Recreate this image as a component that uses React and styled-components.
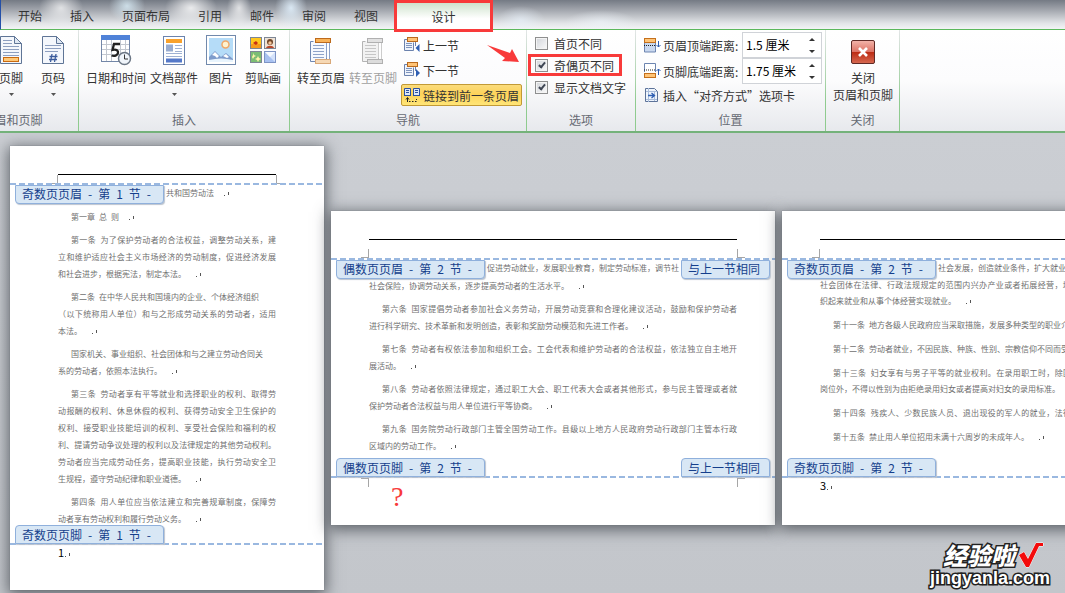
import React from 'react';
import styled, { createGlobalStyle, css } from 'styled-components';

const FooterIcon = () => (
  <svg width="24" height="32" viewBox="0 0 24 32">
    <path d="M1.5 2.5h14l7 7v20h-21z" fill="#f4f7fc" stroke="#5f7596" />
    <path d="M15.5 2.5v7h7z" fill="#dfe8f4" stroke="#5f7596" />
    <path d="M4 6.5h9M4 9.5h9M4 12.5h16M4 15.5h16M4 18.5h16M4 21.5h16" stroke="#8d9fc0" />
    <rect x="4.5" y="23.5" width="15" height="4" fill="#ffc877" stroke="#c96a10" />
  </svg>
);

const PageNumberIcon = () => (
  <svg width="24" height="32" viewBox="0 0 24 32">
    <path d="M1.5 2.5h14l7 7v20h-21z" fill="#f4f7fc" stroke="#5f7596" />
    <path d="M15.5 2.5v7h7z" fill="#dfe8f4" stroke="#5f7596" />
    <path d="M4 11.5h16M4 14.5h16M4 17.5h13" stroke="#8d9fc0" />
    <path d="M11 20l-1.5 8M15 20l-1.5 8M8.500 22.500h8M8 25.500h8" stroke="#3c5c9c" strokeWidth="1.3" fill="none" />
  </svg>
);

const DateIcon = () => (
  <svg width="32" height="32" viewBox="0 0 32 32">
    <rect x="1.5" y="1.5" width="28" height="26" fill="#fff" stroke="#7387a8" />
    <rect x="1" y="1" width="29" height="5" fill="#4f82d8" />
    <path d="M2 10.500h27M2 15.500h27M2 20.500h27M6.500 6v21M11.500 6v21M20.500 6v21M25.500 6v21" stroke="#c2c7cf" />
    <path d="M20 10h-6l-1.500 6c4-1 6 .5 5.500 3-.5 2.500-3.500 3.500-6.500 2.500" stroke="#222" strokeWidth="2.300" fill="none" />
    <circle cx="24.500" cy="24.500" r="6" fill="#f0f5fb" stroke="#6b7685" strokeWidth="1.500" />
    <path d="M24.500 20.500v4.500h3.500" stroke="#333" fill="none" />
  </svg>
);

const PartsIcon = () => (
  <svg width="32" height="32" viewBox="0 0 32 32">
    <rect x="5.500" y="2.500" width="21" height="28" fill="#fff" stroke="#6b83ad" />
    <rect x="8" y="5" width="16" height="4" fill="#f9a22c" />
    <rect x="8" y="10.500" width="7" height="7" fill="#98acd0" />
    <path d="M17 11.500h7M17 14.500h7M17 17.500h7M8 19.500h16M8 22.500h16" stroke="#9fb1d3" />
    <rect x="8" y="24.500" width="16" height="4" fill="#5579c9" />
  </svg>
);

const PictureIcon = () => (
  <svg width="32" height="32" viewBox="0 0 32 32">
    <rect x="1.500" y="1.500" width="29" height="29" fill="#fff" stroke="#7189ac" />
    <rect x="4" y="4" width="24" height="24" fill="#b5dcf8" />
    <circle cx="20.500" cy="10.500" r="3.500" fill="#fff2cf" stroke="#f0a868" strokeWidth="1.500" />
    <path d="M4 23l6-6 6 6 5-4 7 6v3H4z" fill="#7f9ccb" />
    <path d="M7 21l3-3 4 4-2 2-2-2zM18 22l3-2 3 3-2 1z" fill="#fff" />
    <path d="M4 26c8-2 16-2 24 0v2H4z" fill="#e8f4fd" />
  </svg>
);

const ClipArtIcon = () => (
  <svg width="32" height="32" viewBox="0 0 32 32">
    <rect x="3.500" y="3.500" width="11" height="11" fill="#ffc81e" stroke="#7d8694" />
    <path d="M4 10h10v4H4z" fill="#f59a1d" />
    <path d="M6 9l3-2 2 2-2 2z" fill="#c62d13" />
    <rect x="17.500" y="3.500" width="11" height="11" fill="#efe3d6" stroke="#7d8694" />
    <circle cx="23" cy="8" r="3" fill="#704628" />
    <circle cx="23" cy="9" r="1.700" fill="#f5c49a" />
    <path d="M19 14c1-3 7-3 8 0z" fill="#b7472b" />
    <rect x="3.500" y="17.500" width="11" height="11" fill="#7cbd74" stroke="#7d8694" />
    <path d="M6 19l1 2 2 1-2 1-1 2-1-2 1-2zM11 22l1 2 2 1-2 1-1 2-1-2-2-1 2-1z" fill="#fff3a8" />
    <rect x="17.500" y="17.500" width="11" height="11" fill="#d4e2fb" stroke="#7d93c4" />
    <path d="M18 18l10 10H18z" fill="#a8c1f1" />
    <path d="M18 18l5 5 5-5" fill="#f5f9ff" />
  </svg>
);

// the header bar sits at the top, the footer bar at the bottom
const GotoIcon = ({ off }) => (
  <svg width="32" height="32" viewBox="0 0 32 32">
    <path d="M8.500 7.500h-3v20h16v-20" fill={off ? '#f2f2f2' : '#f6f9fe'} stroke={off ? '#b4b4b4' : '#7088b2'} />
    <path d="M8 11.500h11M8 14.500h11M8 17.500h11M8 20.500h11M8 23.500h11" stroke={off ? '#c6c6c6' : '#8fa3c8'} />
    <rect x="10.500" y="4.500" width="15" height="4" fill={off ? '#e2e2e2' : '#f9b257'} stroke={off ? '#b0b0b0' : '#bd6a1c'} />
    <path d="M21.500 9v15M24.500 9v16" stroke={off ? '#ccc' : '#8ba0c7'} />
    <rect x="10.500" y="25.500" width="15" height="4" fill={off ? '#dcdcdc' : '#f6d8b4'} stroke={off ? '#b0b0b0' : '#d8a878'} />
  </svg>
);

const StepIcon = ({ next }) => (
  <svg width="16" height="16" viewBox="0 0 16 16">
    <path d="M3.500 2.500h-3v11h9v-8" fill="#eef3fb" stroke="#6b82ad" />
    <path d="M2 6.500h6M2 8.500h6M2 10.500h6" stroke="#7f95bd" />
    <rect x="3.500" y=".5" width="10" height="4" fill="#ffc477" stroke="#b96a1e" />
    <path d="M11.500 5v4" stroke="#6b82ad" />
    {next
      ? <path d="M12 7l4 4-4 4z" fill="#2f5fb3" />
      : <path d="M15.500 7l-4 4 4 4z" fill="#2f5fb3" />}
  </svg>
);

const LinkIcon = () => (
  <svg width="16" height="16" viewBox="0 0 16 16">
    <path d="M.5 1.500h6v7h-6zM9.500 1.500h6v7h-6z" fill="#dce7f8" stroke="#2c50a0" />
    <path d="M2 3.500h3M2 5.500h3M11 3.500h3M11 5.500h3M0 8.500h7M9 8.500h7" stroke="#2c50a0" />
    <path d="M3.500 15v-4M2 12.500l1.500-2 1.500 2M5 14.500h1.500M8 14.500h1.500M11 14.500h1.500M12.500 12v1" stroke="#222" fill="none" />
  </svg>
);

const DistanceIcon = ({ bottom }) => (
  <svg width="17" height="16" viewBox="0 0 17 16">
    {bottom ? (
      <>
        <path d="M.5 9V.5h11V9" fill="#fff" stroke="#6d85b0" />
        <rect x=".5" y="10.500" width="11" height="4" fill="#ffc477" stroke="#c4701c" />
        <path d="M0 7h12" stroke="#222" strokeDasharray="1 1" />
        <path d="M14.500 12V6M12.500 8l2-2 2 2" stroke="#2f5fb3" fill="none" />
      </>
    ) : (
      <>
        <path d="M.5 6v9h11V6" fill="#c9d8ef" stroke="#6d85b0" />
        <rect x=".5" y="1.500" width="11" height="4" fill="#ffc477" stroke="#c4701c" />
        <path d="M0 8.500h12" stroke="#222" strokeDasharray="1 1" />
        <path d="M14.500 4v6M12.500 8l2 2 2-2" stroke="#2f5fb3" fill="none" />
      </>
    )}
  </svg>
);

const AlignTabIcon = () => (
  <svg width="17" height="16" viewBox="0 0 17 16">
    <path d="M1.500 1.500h9l3 3v10h-12z" fill="#eef4fc" stroke="#5d7399" />
    <path d="M4.500 1v14M10.500 5v9M2 4.500h11M2 12.500h11" stroke="#a9bcdb" />
    <path d="M4 8.500h6M7.500 6l3 2.500-3 2.500" stroke="#2f5fb3" fill="none" strokeWidth="1.300" />
  </svg>
);

const CloseIcon = () => (
  <svg width="26" height="32" viewBox="0 0 26 32">
    <defs>
      <linearGradient id="close" x1="0" y1="0" x2="0" y2="1">
        <stop offset="0" stopColor="#f3b5ab" />
        <stop offset=".5" stopColor="#dd7264" />
        <stop offset=".52" stopColor="#bd2c14" />
        <stop offset="1" stopColor="#d76a52" />
      </linearGradient>
    </defs>
    <rect x="1.500" y="6.500" width="23" height="23" rx="1.500" fill="url(#close)" stroke="#5f2a26" />
    <path d="M9 14l8 8M17 14l-8 8" stroke="#fff" strokeWidth="2.600" />
  </svg>
);

const Return = () => (
  <ReturnSvg width="5" height="5" viewBox="0 0 5 5">
    <path d="M0 4.500h1M4.500 1v3" stroke="#555" />
  </ReturnSvg>
);

const BigButton = ({ icon, text, second, drop, off }) => (
  <Big type="button" disabled={off}>
    {icon}
    <span>{text}</span>
    {second && <span>{second}</span>}
    {drop && (
      <DropSvg width="5" height="3" viewBox="0 0 5 3"><path d="M0 0h5L2.500 3z" fill="#555" /></DropSvg>
    )}
  </Big>
);

const Option = ({ text, checked, marked }) => (
  <OptionLabel $marked={marked}>
    <CheckBox type="checkbox" defaultChecked={checked} />
    {text}
  </OptionLabel>
);

const Distance = ({ id, icon, text, value }) => (
  <DistanceRow>
    <label htmlFor={id}>{icon}{text}</label>
    <Spin>
      <input id={id} type="text" defaultValue={value} />
      <Arrows>
        <button type="button" aria-label="+">
          <svg width="6" height="3" viewBox="0 0 6 3"><path d="M0 3h6L3 0z" fill="#333" /></svg>
        </button>
        <button type="button" aria-label="-">
          <svg width="6" height="3" viewBox="0 0 6 3"><path d="M0 0h6L3 3z" fill="#333" /></svg>
        </button>
      </Arrows>
    </Spin>
  </DistanceRow>
);

const Para = ({ lines, ragged, full, tight }) => (
  <Paragraph>
    {lines.map((line, i) => {
      const last = i === lines.length - 1;
      return (
        <Line key={line} $indent={i === 0 && !tight} $fill={last ? full : !(ragged && i === 0)}>
          {line}{last && !full && <Return />}
        </Line>
      );
    })}
  </Paragraph>
);

const Paper = ({ page }) => (
  <Sheet $width={page.width} $height={page.height} $side={page.side}>
    <HeadArea $height={page.head}>
      <Rule />
      <Corners><Corner $left /><Corner /></Corners>
    </HeadArea>
    <Dashes />
    <TagRow>
      <SectionTag>{page.header}</SectionTag>
      <FirstLine>{page.first}{page.firstEnds && <Return />}</FirstLine>
      {page.same && <Tag>与上一节相同</Tag>}
    </TagRow>
    <Content $loose={page.loose} $apart={page.firstEnds}>
      {page.paras.map((para) => <Para key={para.lines[0]} {...para} />)}
    </Content>
    <TagRow $foot>
      <SectionTag $foot>{page.footer}</SectionTag>
      {page.same && <Tag $foot>与上一节相同</Tag>}
    </TagRow>
    <Dashes />
    <FootArea $height={page.foot}>
      {page.same && <Corners><Corner $left $foot /><Corner $foot /></Corners>}
      {page.number && <PageNumber>{page.number}<Return /></PageNumber>}
      {page.same && <Question>?</Question>}
    </FootArea>
  </Sheet>
);

const tabs = ['开始', '插入', '页面布局', '引用', '邮件', '审阅', '视图'];

const pages = [
  {
    width: 314, height: 444, side: 48, head: 37, foot: 45,
    header: '奇数页页眉\u2002-\u2002第\u20021\u2002节\u2002-',
    footer: '奇数页页脚\u2002-\u2002第\u20021\u2002节\u2002-',
    first: '共和国劳动法',
    firstEnds: true,
    number: '1',
    paras: [
      { lines: ['第一章\u2002总\u2002则'] },
      { lines: [
        '第一条\u2002为了保护劳动者的合法权益\uff0c调整劳动关系\uff0c建',
        '立和维护适应社会主义市场经济的劳动制度\uff0c促进经济发展',
        '和社会进步\uff0c根据宪法\uff0c制定本法。',
      ] },
      { ragged: true, lines: [
        '第二条\u2002在中华人民共和国境内的企业、个体经济组织',
        '\uff08以下统称用人单位\uff09和与之形成劳动关系的劳动者\uff0c适用',
        '本法。',
      ] },
      { ragged: true, lines: [
        '国家机关、事业组织、社会团体和与之建立劳动合同关',
        '系的劳动者\uff0c依照本法执行。',
      ] },
      { lines: [
        '第三条\u2002劳动者享有平等就业和选择职业的权利、取得劳',
        '动报酬的权利、休息休假的权利、获得劳动安全卫生保护的',
        '权利、接受职业技能培训的权利、享受社会保险和福利的权',
        '利、提请劳动争议处理的权利以及法律规定的其他劳动权利。',
        '劳动者应当完成劳动任务\uff0c提高职业技能\uff0c执行劳动安全卫',
        '生规程\uff0c遵守劳动纪律和职业道德。',
      ] },
      { lines: [
        '第四条\u2002用人单位应当依法建立和完善规章制度\uff0c保障劳',
        '动者享有劳动权利和履行劳动义务。',
      ] },
    ],
  },
  {
    width: 444, height: 314, side: 38, head: 47, foot: 47,
    header: '偶数页页眉\u2002-\u2002第\u20022\u2002节\u2002-',
    footer: '偶数页页脚\u2002-\u2002第\u20022\u2002节\u2002-',
    first: '促进劳动就业\uff0c发展职业教育\uff0c制定劳动标准\uff0c调节社',
    same: true,
    paras: [
      { tight: true, lines: ['社会保险\uff0c协调劳动关系\uff0c逐步提高劳动者的生活水平。'] },
      { lines: [
        '第六条\u2002国家提倡劳动者参加社会义务劳动\uff0c开展劳动竞赛和合理化建议活动\uff0c鼓励和保护劳动者',
        '进行科学研究、技术革新和发明创造\uff0c表彰和奖励劳动模范和先进工作者。',
      ] },
      { lines: [
        '第七条\u2002劳动者有权依法参加和组织工会。工会代表和维护劳动者的合法权益\uff0c依法独立自主地开',
        '展活动。',
      ] },
      { lines: [
        '第八条\u2002劳动者依照法律规定\uff0c通过职工大会、职工代表大会或者其他形式\uff0c参与民主管理或者就',
        '保护劳动者合法权益与用人单位进行平等协商。',
      ] },
      { lines: [
        '第九条\u2002国务院劳动行政部门主管全国劳动工作。县级以上地方人民政府劳动行政部门主管本行政',
        '区域内的劳动工作。',
      ] },
    ],
  },
  {
    width: 444, height: 314, side: 38, head: 47, foot: 47, loose: true,
    header: '奇数页页眉\u2002-\u2002第\u20022\u2002节\u2002-',
    footer: '奇数页页脚\u2002-\u2002第\u20022\u2002节\u2002-',
    first: '社会发展\uff0c创造就业条件\uff0c扩大就业机会。',
    number: '3',
    paras: [
      { tight: true, lines: [
        '社会团体在法律、行政法规规定的范围内兴办产业或者拓展经营\uff0c增加就业。国家支持劳动者自愿组',
        '织起来就业和从事个体经营实现就业。',
      ] },
      { lines: ['第十一条\u2002地方各级人民政府应当采取措施\uff0c发展多种类型的职业介绍机构\uff0c提供就业服务。'] },
      { lines: ['第十二条\u2002劳动者就业\uff0c不因民族、种族、性别、宗教信仰不同而受歧视。'] },
      { lines: [
        '第十三条\u2002妇女享有与男子平等的就业权利。在录用职工时\uff0c除国家规定的不适合妇女的工种或者',
        '岗位外\uff0c不得以性别为由拒绝录用妇女或者提高对妇女的录用标准。',
      ] },
      { full: true, lines: ['第十四条\u2002残疾人、少数民族人员、退出现役的军人的就业\uff0c法律、法规有特别规定的\uff0c从其规定'] },
      { lines: ['第十五条\u2002禁止用人单位招用未满十六周岁的未成年人。'] },
    ],
  },
];

const App = () => {
  return (
    <Wrap>
      <GlobalStyle />
      <TabBar>
        {tabs.map((tab) => <Tab key={tab} type="button">{tab}</Tab>)}
        <Marked><ActiveTab type="button">设计</ActiveTab></Marked>
      </TabBar>

      <Ribbon>
        <Group $width={132} $cut>
          <Tools $end>
            <BigButton icon={<FooterIcon />} text="页脚" drop />
            <BigButton icon={<PageNumberIcon />} text="页码" drop />
          </Tools>
          <GroupName>页眉和页脚</GroupName>
        </Group>

        <Group $width={211}>
          <Tools>
            <BigButton icon={<DateIcon />} text="日期和时间" />
            <BigButton icon={<PartsIcon />} text="文档部件" drop />
            <BigButton icon={<PictureIcon />} text="图片" />
            <BigButton icon={<ClipArtIcon />} text="剪贴画" />
          </Tools>
          <GroupName>插入</GroupName>
        </Group>

        <Group $width={236}>
          <Tools>
            <BigButton icon={<GotoIcon />} text="转至页眉" />
            <BigButton icon={<GotoIcon off />} text="转至页脚" off />
            <Stack>
              <SmallButton type="button"><StepIcon />上一节</SmallButton>
              <SmallButton type="button"><StepIcon next />下一节</SmallButton>
              <SmallButton type="button" $on><LinkIcon />链接到前一条页眉</SmallButton>
            </Stack>
          </Tools>
          <GroupName>导航</GroupName>
        </Group>

        <Group $width={109}>
          <Pointer width="34" height="20" viewBox="0 0 34 20">
            <path d="M1 1l23 8 2-4 7 13-17-1 3-3z" fill="#f83a3a" />
          </Pointer>
          <Options>
            <Option text="首页不同" />
            <Option text="奇偶页不同" checked marked />
            <Option text="显示文档文字" checked />
          </Options>
          <GroupName>选项</GroupName>
        </Group>

        <Group $width={190}>
          <Distances>
            <Distance id="top" icon={<DistanceIcon />} text="页眉顶端距离:" value="1.5 厘米" />
            <Distance id="bottom" icon={<DistanceIcon bottom />} text="页脚底端距离:" value="1.75 厘米" />
            <AlignButton type="button"><AlignTabIcon />插入“对齐方式”选项卡</AlignButton>
          </Distances>
          <GroupName>位置</GroupName>
        </Group>

        <Group $width={74}>
          <Tools $center>
            <BigButton icon={<CloseIcon />} text="关闭" second="页眉和页脚" />
          </Tools>
          <GroupName>关闭</GroupName>
        </Group>
      </Ribbon>

      <Workspace>
        {pages.map((page) => <Paper key={page.header} page={page} />)}
      </Workspace>

      <Brand>
        <BrandTop>
          经验啦
          <svg width="26" height="28" viewBox="0 0 26 28">
            <path d="M1 14l5-3 4 7L18 2h7v3h-4L11 26H8z" fill="#f30b0b" stroke="#fff" strokeWidth="1" />
          </svg>
        </BrandTop>
        <BrandUrl>jingyanla.com</BrandUrl>
      </Brand>
    </Wrap>
  );
};

const GlobalStyle = createGlobalStyle`
  body {
    margin: 0;
    font-family: "Noto Sans CJK SC", "Liberation Sans", sans-serif;
    font-size: 12px;
    line-height: 17px;
    color: #333;
  }

  button, input {
    font: inherit;
    color: inherit;
    box-sizing: border-box;
  }

  svg {
    flex-shrink: 0;
  }
`;

const Wrap = styled.div`
  position: relative;
  display: flex;
  flex-direction: column;
  min-height: 100vh;
  overflow: hidden;
`;

const TabBar = styled.div`
  display: flex;
  align-items: stretch;
  height: 29px;
  padding: 0 0 0 3px;
  border-left: 1px solid #2450a8;
  border-bottom: 1px solid #5cb85c;
  background:
    radial-gradient(ellipse 22px 18px at 60px 8px, rgba(255, 255, 255, 0.7), transparent),
    radial-gradient(ellipse 18px 16px at 126px 6px, rgba(220, 240, 250, 0.8), transparent),
    radial-gradient(ellipse 26px 18px at 190px 8px, rgba(255, 255, 255, 0.8), transparent),
    radial-gradient(ellipse 12px 18px at 238px 8px, rgba(255, 255, 255, 0.7), transparent),
    radial-gradient(ellipse 16px 20px at 290px 8px, rgba(225, 240, 252, 0.9), transparent),
    radial-gradient(ellipse 24px 14px at 520px 20px, rgba(235, 245, 255, 0.6), transparent),
    radial-gradient(ellipse 36px 12px at 600px 22px, rgba(240, 246, 252, 0.6), transparent),
    linear-gradient(#747a84, #a3a7ae 35%, #e2e4e7 80%, #f3f4f6);
`;

const Tab = styled.button`
  border: none;
  background: transparent;
  padding: 1px 14px 0;
  cursor: pointer;
`;

const Marked = styled.div`
  z-index: 1;
  height: 32px;
  margin: 0 0 0 2px;
  border: 3px solid #f83a3a;
  box-sizing: border-box;
`;

const ActiveTab = styled(Tab)`
  width: 93px;
  height: 26px;
  padding: 0;
  background: linear-gradient(#cfe3cd, #fff 60%);
`;

const Ribbon = styled.div`
  display: flex;
  height: 101px;
  border-bottom: 2px solid #74b27a;
  background: linear-gradient(#fff, #fcfcfd 50%, #e7e9ed);
`;

const Group = styled.div`
  position: relative;
  display: flex;
  flex-direction: column;
  flex: 0 0 ${(props) => props.$width}px;
  margin-left: ${(props) => (props.$cut ? '-53px' : '0')};
  box-sizing: border-box;
  border-right: 1px solid;
  border-image: linear-gradient(#e4e6e8, #8fcb8f 70%) 1;
`;

const GroupName = styled.div`
  padding: 0 0 3px;
  text-align: center;
  color: #666a73;
`;

const Tools = styled.div`
  display: flex;
  flex: 1;
  align-items: flex-start;
  padding: 4px 4px 0 5px;
  justify-content: ${(props) => (props.$end ? 'flex-end' : props.$center ? 'center' : 'flex-start')};
`;

const Big = styled.button`
  display: flex;
  flex-direction: column;
  align-items: center;
  min-width: 42px;
  padding: 0 2px;
  border: none;
  background: transparent;
  white-space: nowrap;
  cursor: pointer;

  svg + span {
    margin-top: 3px;
  }

  &:disabled {
    color: #a0a0a0;
  }
`;

const DropSvg = styled.svg`
  margin-top: 7px;
`;

const Stack = styled.div`
  display: flex;
  flex-direction: column;
  align-items: flex-start;
  gap: 3px;
  padding: 0 0 0 2px;
`;

const SmallButton = styled.button`
  display: flex;
  align-items: center;
  gap: 3px;
  height: 22px;
  padding: 0 2px;
  border: 1px solid transparent;
  border-radius: 2px;
  background: transparent;
  white-space: nowrap;
  cursor: pointer;
  ${(props) => props.$on && css`
    border-color: #c29a36;
    background: linear-gradient(#fbdc7c, #fdd35a 45%, #ffe577);
  `}
`;

const Pointer = styled.svg`
  position: absolute;
  left: -41px;
  top: 14px;
`;

const Options = styled.div`
  display: flex;
  flex-direction: column;
  align-items: flex-start;
  flex: 1;
  padding: 2px 0 0 1px;
`;

const OptionLabel = styled.label`
  display: flex;
  align-items: center;
  gap: 6px;
  height: 22px;
  padding: 0 8px 0 7px;
  white-space: nowrap;
  box-shadow: ${(props) => (props.$marked ? 'inset 0 0 0 3px #f83a3a' : 'none')};
`;

const CheckBox = styled.input`
  appearance: none;
  position: relative;
  width: 13px;
  height: 13px;
  margin: 0;
  border: 1px solid #8e8f8f;
  background: linear-gradient(135deg, #d2d5da, #fafafa);
  box-shadow: inset 0 0 0 1px #f4f4f4;

  &:checked::after {
    content: '';
    position: absolute;
    left: 4px;
    top: 1px;
    width: 2px;
    height: 5px;
    border: solid #3f4654;
    border-width: 0 2px 2px 0;
    transform: rotate(40deg);
  }
`;

const Distances = styled.div`
  display: flex;
  flex-direction: column;
  flex: 1;
  padding: 2px 3px 0 8px;
`;

const DistanceRow = styled.div`
  display: flex;
  align-items: center;
  justify-content: space-between;
  height: 26px;

  label {
    display: flex;
    align-items: center;
    gap: 2px;
    white-space: nowrap;
  }
`;

const Spin = styled.div`
  display: flex;
  width: 80px;
  height: 26px;
  box-sizing: border-box;
  border: 1px solid #d0d3d8;
  background: #fff;

  input {
    flex: 1;
    min-width: 0;
    padding: 0 0 2px 3px;
    border: none;
    outline: none;
    background: transparent;
    color: #000;
  }
`;

const Arrows = styled.div`
  display: flex;
  flex-direction: column;
  width: 18px;

  button {
    display: flex;
    flex: 1;
    align-items: center;
    justify-content: center;
    padding: 0;
    border: none;
    background: transparent;
  }
`;

const AlignButton = styled.button`
  display: flex;
  align-items: center;
  gap: 2px;
  height: 22px;
  padding: 0;
  border: none;
  background: transparent;
  white-space: nowrap;
`;

const Workspace = styled.div`
  display: flex;
  align-items: center;
  flex: 1;
  gap: 7px;
  padding: 13px 0 3px 10px;
  overflow: hidden;
  background: linear-gradient(#cbced3, #c3c6cb);
`;

const Sheet = styled.div`
  display: flex;
  flex-direction: column;
  flex: 0 0 ${(props) => props.$width}px;
  min-height: ${(props) => props.$height}px;
  background: #fff;
  box-shadow: 0 0 1px #70757c, 0 3px 14px 2px rgba(62, 67, 73, 0.75);
  --side: ${(props) => props.$side}px;
`;

const HeadArea = styled.div`
  display: flex;
  flex-direction: column;
  justify-content: space-between;
  height: ${(props) => props.$height}px;
  padding-top: 28px;
  box-sizing: border-box;
`;

const Rule = styled.div`
  flex: 0 0 1px;
  margin: 0 var(--side);
  background: #000;
`;

const Corners = styled.div`
  display: flex;
  justify-content: space-between;
  padding: 0 calc(var(--side) - 8px);
`;

const Corner = styled.div`
  width: 7px;
  height: 8px;
  border: 0 solid #a6a6a6;
  border-width: ${({ $foot, $left }) => ($foot ? '1px' : '0')
    + ($left ? ' 1px ' : ' 0 ')
    + ($foot ? '0' : '1px')
    + ($left ? ' 0' : ' 1px')};
`;

const Dashes = styled.div`
  flex: 0 0 2px;
  background: repeating-linear-gradient(90deg, #9ab8e0 0 6px, transparent 6px 9px);
`;

const TagRow = styled.div`
  display: flex;
  align-items: flex-start;
  justify-content: space-between;
  height: ${(props) => (props.$foot ? '18px' : '17px')};
  padding: 0 5px;
`;

const Tag = styled.div`
  z-index: 1;
  flex-shrink: 0;
  height: 19px;
  padding: 0 9px 0 6px;
  box-sizing: border-box;
  border: 1px solid #8fb0dc;
  border-radius: ${(props) => (props.$foot ? '4px 4px 0 0' : '0 0 4px 4px')};
  background: #d8e7f5;
  box-shadow: 1px 1px 1px #bcc4cf;
  color: #153f8c;
  line-height: ${(props) => (props.$foot ? '17px' : '15px')};
  white-space: nowrap;
`;

const SectionTag = styled(Tag)`
  min-width: 149px;
`;

const FirstLine = styled.div`
  flex: 1;
  min-width: 0;
  padding-left: 2px;
  overflow: hidden;
  font-size: 8px;
  line-height: 15px;
  color: #6f6f6f;
  white-space: nowrap;
`;

const Content = styled.div`
  flex: 1 0 0;
  display: flex;
  flex-direction: column;
  height: 0;
  gap: ${(props) => (props.$loose ? '8px' : '6px')};
  line-height: ${(props) => (props.$loose ? '16px' : '17px')};
  padding: ${(props) => (props.$apart ? '6px' : '0')} var(--side) 0;
  font-size: 8px;
  color: #6f6f6f;
`;

const Paragraph = styled.div`
  white-space: nowrap;
`;

const Line = styled.div`
  padding-left: ${(props) => (props.$indent ? '13px' : '0')};
  text-align-last: ${(props) => (props.$fill ? 'justify' : 'left')};
`;

const ReturnSvg = styled.svg`
  margin-left: 10px;
`;

const FootArea = styled.div`
  height: ${(props) => props.$height}px;
`;

const PageNumber = styled.div`
  padding: 0 var(--side);
  font-size: 11px;
  line-height: 14px;
  color: #000;

  svg {
    margin-left: 1px;
  }
`;

const Question = styled.div`
  padding-left: 60px;
  font-family: "Liberation Serif", serif;
  font-size: 28px;
  line-height: 20px;
  color: #f83a3a;
`;

const Brand = styled.div`
  position: absolute;
  right: 15px;
  bottom: 6px;
  z-index: 2;
  display: flex;
  flex-direction: column;
  align-items: flex-end;
  font-weight: 900;
  color: #fff;
  -webkit-text-stroke: 3px #222;
  paint-order: stroke fill;
`;

const BrandTop = styled.div`
  display: flex;
  align-items: center;
  gap: 3px;
  padding-right: 6px;
  font-size: 24px;
  font-style: italic;
  line-height: 26px;
`;

const BrandUrl = styled.div`
  font-family: "Liberation Sans", sans-serif;
  font-size: 18px;
  line-height: 18px;
`;

export default App;
